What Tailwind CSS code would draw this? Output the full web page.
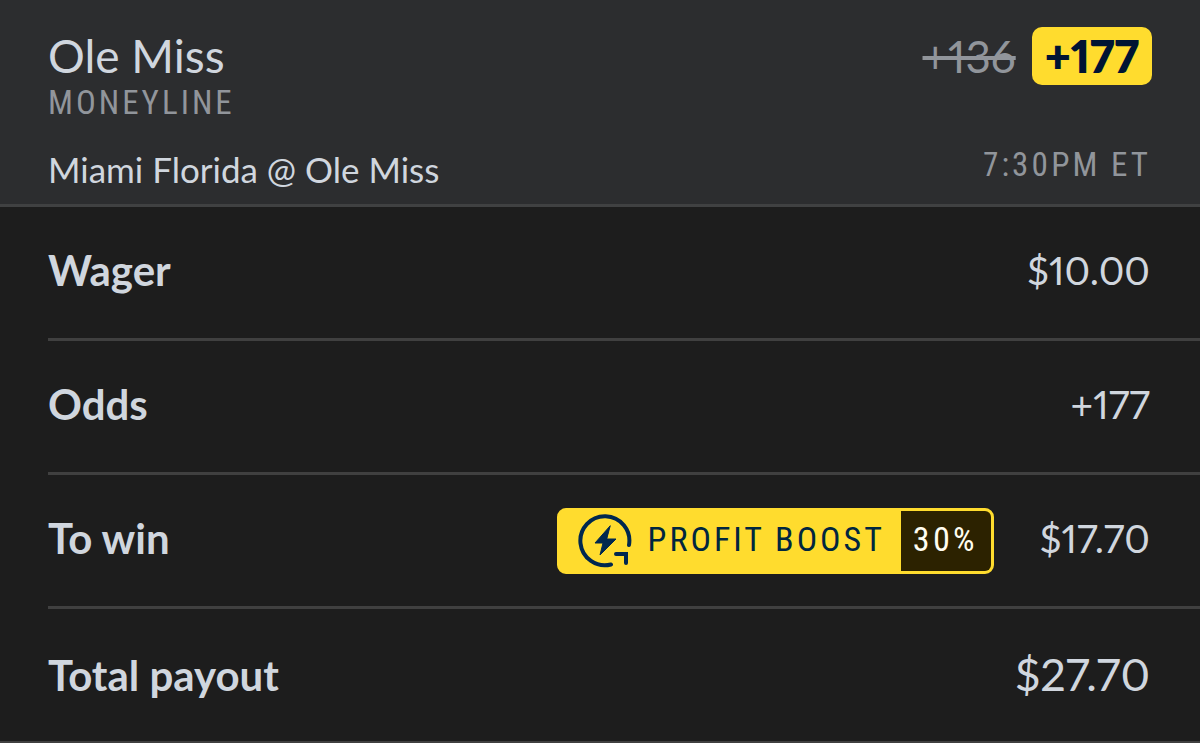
<!DOCTYPE html>
<html lang="en">
<head>
  <meta charset="UTF-8" />
  <title>Bet Slip</title>
  <meta name="viewport" content="width=device-width, initial-scale=1.0" />
  <script src="https://cdn.jsdelivr.net/npm/@tailwindcss/browser@4"></script>
</head>
<body class="bg-[#1d1d1d] text-[#d0d6de] font-['Lato','Open_Sans',sans-serif] proportional-nums overflow-x-hidden">
  <main>
    <header class="bg-[#2c2d2f] border-b-3 border-[#404142] px-12 pt-[27px] pb-3">
      <div class="flex items-start justify-between">
        <div>
          <h1 class="text-[46px] leading-[58px]">Ole Miss</h1>
          <p class="text-[33px] leading-9 tracking-[3px] text-[#91959b] font-['Roboto_Condensed','Roboto',sans-serif]">MONEYLINE</p>
        </div>
        <div class="flex items-center gap-4 text-[45px] leading-[58px]">
          <s class="text-[44px] text-[#91959b]">+136</s>
          <strong class="rounded-[10px] bg-[#ffdc2e] px-[13px] font-extrabold text-[#001433]">+177</strong>
        </div>
      </div>
      <div class="mt-[26px] flex items-start justify-between">
        <p class="text-[35px] leading-[45px]">Miami Florida @ Ole Miss</p>
        <p class="pr-px text-[33px] leading-9 tracking-[3px] text-[#91959b] font-['Roboto_Condensed','Roboto',sans-serif]">7:30PM ET</p>
      </div>
    </header>

    <dl class="pl-12 text-[39px]">
      <div class="flex h-[134px] items-center justify-between border-b-3 border-[#404040] pr-[50px] pb-1">
        <dt class="text-[42px] font-bold">Wager</dt>
        <dd>$10.00</dd>
      </div>
      <div class="flex h-[134px] items-center justify-between border-b-3 border-[#404040] pr-[50px] pb-1">
        <dt class="text-[42px] font-bold">Odds</dt>
        <dd>+177</dd>
      </div>
      <div class="flex h-[134px] items-center justify-between border-b-3 border-[#404040] pr-[50px]">
        <dt class="pb-1 text-[42px] font-bold">To win</dt>
        <dd class="flex items-center gap-[46px]">
          <span class="flex h-[66px] overflow-hidden rounded-[9px] border-3 border-[#ffdc2e] bg-[#ffdc2e] text-[34px] tracking-[3px] font-['Roboto_Condensed','Roboto',sans-serif]">
            <span class="flex items-center gap-4 pl-[18px] pr-4 text-[#00263f]">
              <svg class="size-[54px]" viewBox="0 0 54 54" fill="none" stroke="#00284f" stroke-width="4" stroke-linecap="round" aria-hidden="true">
                <path d="M51 31A24.500 24.500 0 1 0 33 50.500" />
                <path d="M38 40H48V49" stroke-linejoin="miter" />
                <path d="M32 12L17 29H25L22 41L38 25H29Z" fill="#00284f" stroke-width="1" stroke-linejoin="round" />
              </svg>
              <span class="pb-[3px]">PROFIT BOOST</span>
            </span>
            <span class="flex items-center bg-[#2c2200] pl-3 pr-[13px] pb-[3px] text-[#fffdf0]">30%</span>
          </span>
          <span class="pb-1">$17.70</span>
        </dd>
      </div>
      <div class="flex h-[132px] items-center justify-between pr-[50px]">
        <dt class="text-[42px] font-bold">Total payout</dt>
        <dd class="text-[45px]">$27.70</dd>
      </div>
    </dl>
    <hr class="border-t-2 border-[#404040]" />
  </main>
</body>
</html>
